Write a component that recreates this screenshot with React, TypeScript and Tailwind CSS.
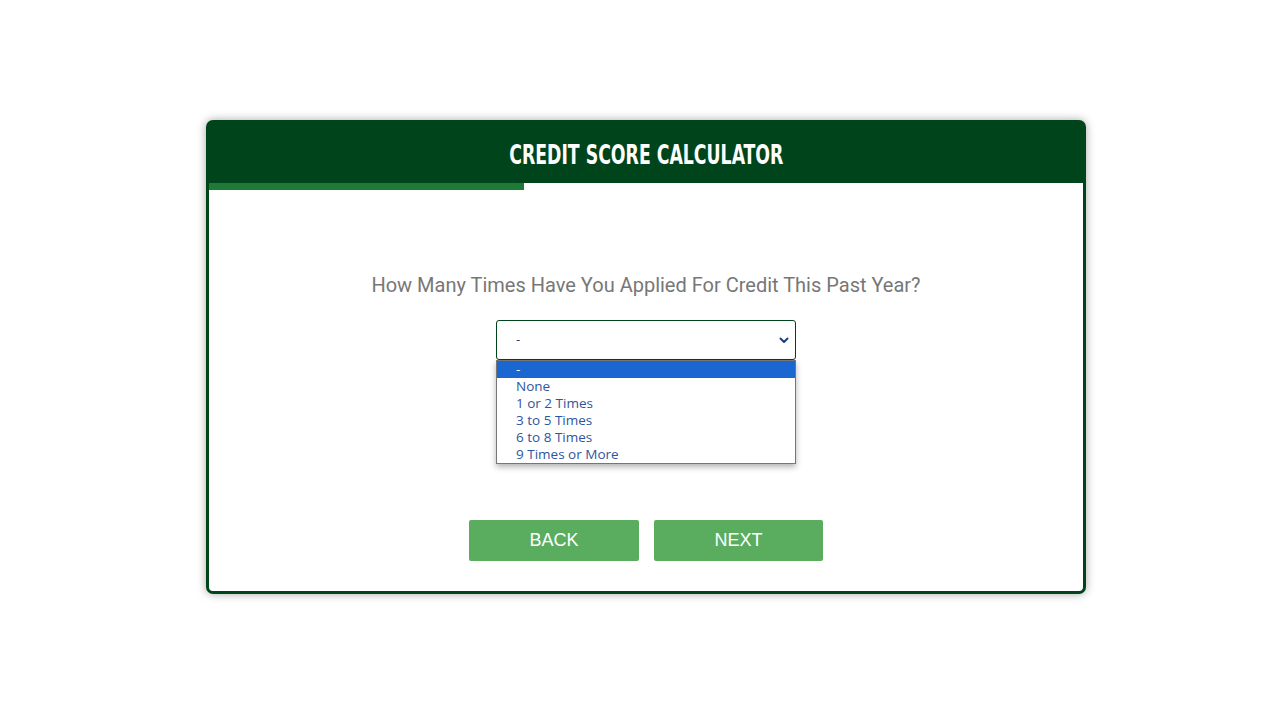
import { useState } from "react";

const options = ["-", "None", "1 or 2 Times", "3 to 5 Times", "6 to 8 Times", "9 Times or More"];

export default function App() {
  const [selected] = useState(0);

  return (
    <div className="min-h-[720px] w-full bg-white pt-[120px] pl-[206px]">
      <div className="w-[880px] h-[474px] rounded-[7px] border-[3px] border-[#00441b] bg-white shadow-[0_0_10px_rgba(0,0,0,0.35)] flex flex-col">
        <div className="h-[60px] bg-[#00441b] flex items-center justify-center">
          <h1
            className="inline-block text-white text-[26px] font-bold pt-[4px] scale-x-[0.74] whitespace-nowrap"
            style={{ fontFamily: '"DejaVu Sans Condensed", sans-serif' }}
          >
            CREDIT SCORE CALCULATOR
          </h1>
        </div>
        <div className="h-[7px] w-[315px] bg-[#1e7a37]"></div>

        <div className="flex flex-col items-center">
          <p className="mt-[80px] text-[20px] text-[#777777]" style={{ fontFamily: "Roboto, sans-serif" }}>
            How Many Times Have You Applied For Credit This Past Year?
          </p>

          <div className="relative mt-[20px] w-[300px]">
            <div
              className="h-[40px] border border-[#00441b] rounded-[3px] flex items-center justify-between pl-[19px] pr-[5px] text-[#1d3f86] text-[13px] bg-white"
              style={{ fontFamily: '"Open Sans", sans-serif' }}
            >
              <span>-</span>
              <svg width="12" height="12" viewBox="0 0 12 12" fill="none">
                <path d="M2.5 4.5 L6 8 L9.5 4.5" stroke="#1d3f86" strokeWidth="2" strokeLinecap="round" strokeLinejoin="round" />
              </svg>
            </div>
            <ul
              className="absolute left-0 top-[40px] w-[300px] bg-white border border-[#767676] shadow-[0_3px_6px_rgba(0,0,0,0.3)] text-[13.5px] z-10"
              style={{ fontFamily: '"Open Sans", sans-serif' }}
            >
              {options.map((o, i) => (
                <li
                  key={o}
                  className={
                    i === selected
                      ? "h-[17px] leading-[17px] pl-[19px] bg-[#1a67d2] text-white"
                      : "h-[17px] leading-[17px] pl-[19px] text-[#2e55a0]"
                  }
                >
                  {o}
                </li>
              ))}
            </ul>
          </div>

          <div className="mt-[160px] flex gap-[15px]" style={{ fontFamily: '"Liberation Sans", Arial, sans-serif' }}>
            <button className="w-[170px] h-[41px] bg-[#5aad5f] text-white text-[18px] rounded-[2px]">BACK</button>
            <button className="w-[169px] h-[41px] bg-[#5aad5f] text-white text-[18px] rounded-[2px]">NEXT</button>
          </div>
        </div>
      </div>
    </div>
  );
}
